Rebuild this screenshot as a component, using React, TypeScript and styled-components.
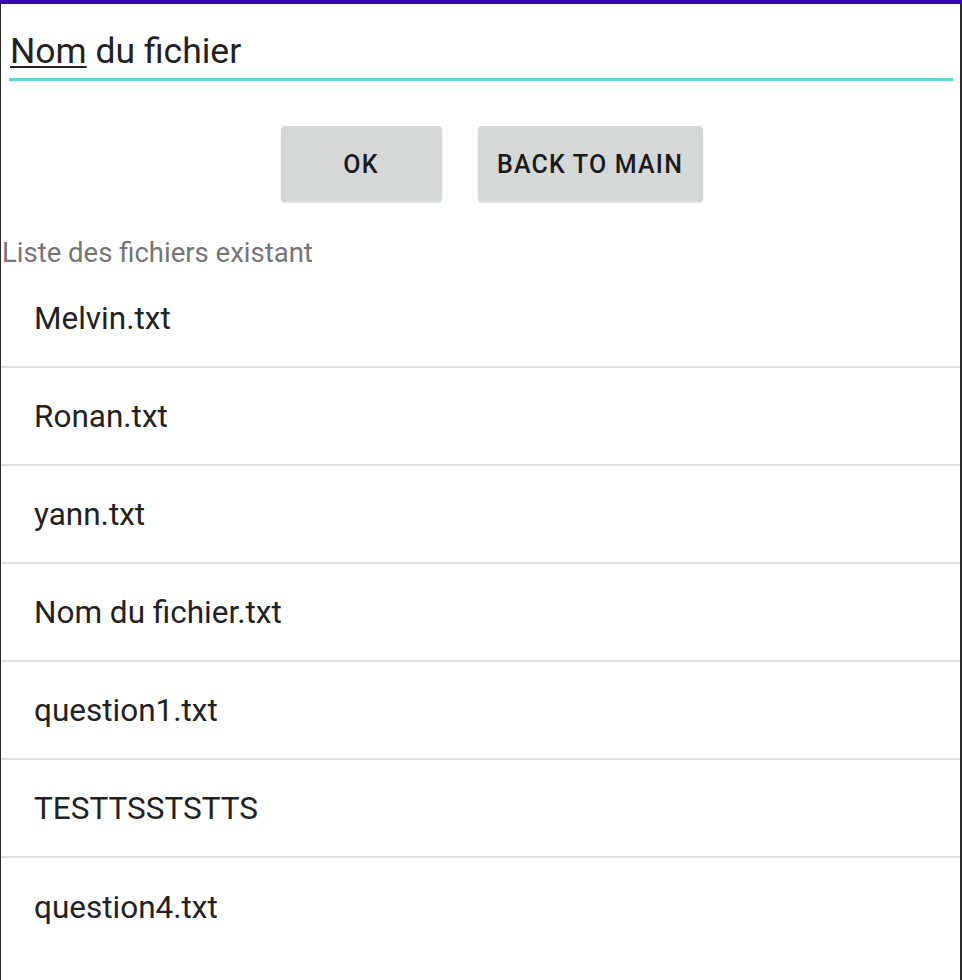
import React from "react";
import styled, { createGlobalStyle } from "styled-components";

const Global = createGlobalStyle`
  html, body { margin: 0; padding: 0; background: #ffffff; }
  body { font-family: Roboto, "Noto Sans", "Liberation Sans", sans-serif; }
  * { box-sizing: border-box; }
`;

const Screen = styled.div`
  width: 962px;
  height: 980px;
  display: flex;
  flex-direction: column;
  background: #ffffff;
  overflow: hidden;
`;

const StatusStrip = styled.div`
  height: 4px;
  flex: none;
  background: #3907b1;
`;

const Body = styled.div`
  flex: 1;
  display: flex;
  flex-direction: column;
  border-left: 1px solid #2a2a2a;
  border-right: 2px solid #2a2a2a;
`;

const InputField = styled.div`
  margin: 0 7px 0 8px;
  padding-top: 26px;
  border-bottom: 3px solid #62d8c6;
`;

const InputText = styled.div`
  font-size: 35.5px;
  line-height: 42px;
  color: #222222;
  padding-left: 1px;
  height: 48px;
`;

const Misspelled = styled.span`
  text-decoration: underline;
  text-decoration-thickness: 2px;
  text-underline-offset: 3px;
  text-decoration-color: #222222;
`;

const ButtonRow = styled.div`
  display: flex;
  justify-content: center;
  gap: 36px;
  margin-top: 45px;
  padding-left: 22px;
`;

const Button = styled.button<{ $w: number }>`
  width: ${(p) => p.$w}px;
  height: 76px;
  border: none;
  border-radius: 4px;
  background: #d6d7d7;
  box-shadow: 0 1px 2px rgba(0, 0, 0, 0.12);
  font-family: Roboto, "Noto Sans", "Liberation Sans", sans-serif;
  font-weight: 500;
  font-size: 25px;
  color: #1a1a1a;
  letter-spacing: 1.2px;
  text-transform: uppercase;
  padding: 0;
`;

const SectionLabel = styled.div`
  margin-top: 35px;
  padding-left: 1px;
  font-size: 27.5px;
  line-height: 31px;
  color: #757575;
`;

const FileList = styled.ul`
  list-style: none;
  margin: 2px 0 0 0;
  padding: 0;
`;

const FileRow = styled.li`
  height: 98px;
  display: flex;
  align-items: center;
  padding-left: 33px;
  font-size: 31.5px;
  color: #222222;
  border-bottom: 2px solid #e0e0e0;
  &:last-child { border-bottom: none; }
`;

const files = [
  "Melvin.txt",
  "Ronan.txt",
  "yann.txt",
  "Nom du fichier.txt",
  "question1.txt",
  "TESTTSSTSTTS",
  "question4.txt",
];

export default function App() {
  return (
    <>
      <Global />
      <Screen>
        <StatusStrip />
        <Body>
          <InputField>
            <InputText>
              <Misspelled>Nom</Misspelled> du fichier
            </InputText>
          </InputField>
          <ButtonRow>
            <Button $w={161}>OK</Button>
            <Button $w={225}>Back to main</Button>
          </ButtonRow>
          <SectionLabel>Liste des fichiers existant</SectionLabel>
          <FileList>
            {files.map((f) => (
              <FileRow key={f}>{f}</FileRow>
            ))}
          </FileList>
        </Body>
      </Screen>
    </>
  );
}
